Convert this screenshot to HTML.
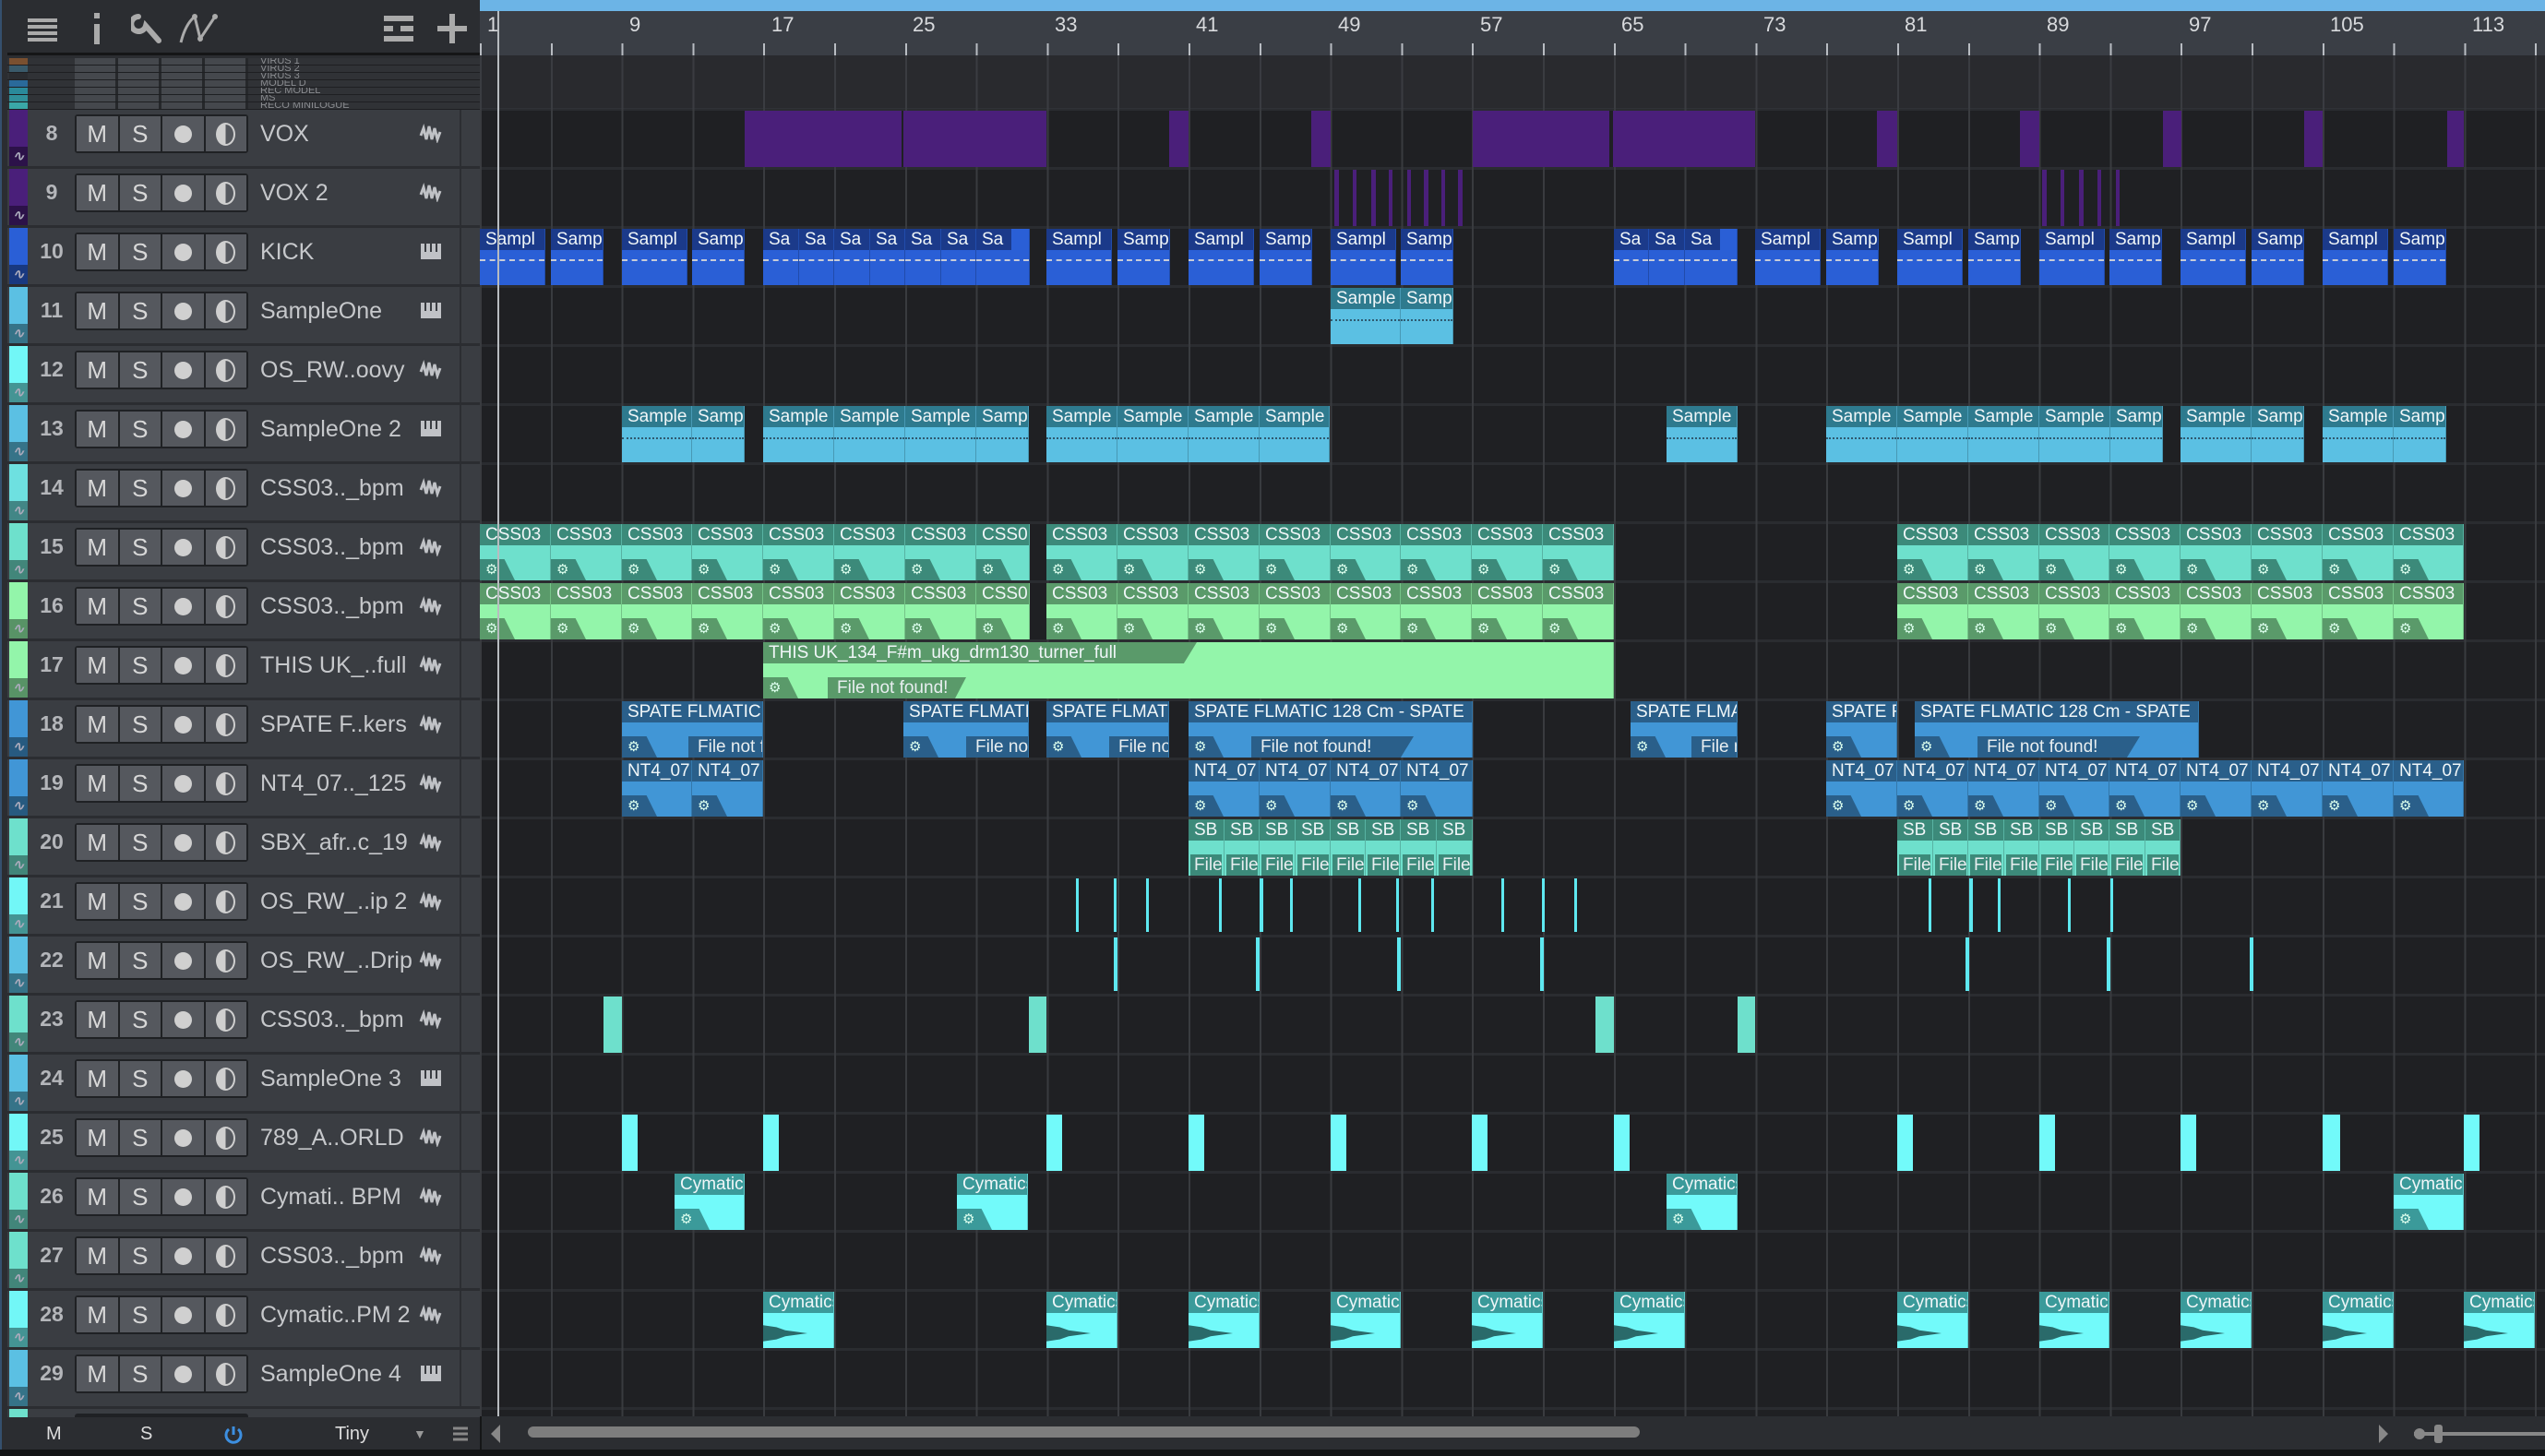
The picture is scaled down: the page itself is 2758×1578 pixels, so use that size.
<!DOCTYPE html>
<html><head><meta charset="utf-8"><style>
*{margin:0;padding:0;box-sizing:border-box}
body{width:2758px;height:1578px;background:#1a1b1d;position:relative;overflow:hidden;font-family:"Liberation Sans",sans-serif}
.abs{position:absolute}
#lp{position:absolute;left:0;top:0;width:520px;height:1578px;background:#2b2d31;border-left:2px solid #35506e}
#tb{position:absolute;left:8px;top:0;width:512px;height:60px;background:#2b2d31;border-bottom:3px solid #151617}
.tr{position:absolute;left:8px;width:512px;height:61px;background:#3a3d42}
.cs{position:absolute;left:2px;top:0;width:20px;height:40px}
.cs2{position:absolute;left:2px;top:40px;width:20px;height:21px;box-shadow:inset 0 0 0 30px rgba(0,0,0,.4);color:#aab;font-size:15px;text-align:center;line-height:21px;font-style:italic}
.n{position:absolute;left:26px;width:44px;top:0;line-height:50px;text-align:center;color:#b4b6ba;font-weight:bold;font-size:23px}
.bt{position:absolute;left:73px;top:5px;width:188px;height:42px;border:2px solid #1f2124;border-radius:3px;background:#1f2124;display:flex;gap:2px}
.bt i{flex:1;background:#55585e;color:#d8d8d8;font-style:normal;font-size:26px;text-align:center;line-height:39px}
.bt i:nth-child(3),.bt i:nth-child(4){font-size:0;color:transparent;display:flex;align-items:center;justify-content:center}
.bt i:nth-child(3)::after{content:"";width:19px;height:19px;border-radius:50%;background:#d0d0d0}
.bt i:nth-child(4)::after{content:"";width:17px;height:21px;border-radius:50%;border:2px solid #cfcfcf;background:linear-gradient(90deg,#cfcfcf 50%,transparent 50%)}
.nm{position:absolute;left:274px;top:0;line-height:52px;color:#c6c8cb;font-size:25px;white-space:nowrap}
.ic{position:absolute;left:446px;top:14px;width:26px;height:22px}
.rc{position:absolute;left:490px;top:0;width:2px;height:61px;background:#2c2e32}
#tl{position:absolute;left:520px;top:60px;width:2238px;height:1475px;background-color:#1f2023;
background-image:repeating-linear-gradient(90deg,#393b3f 0 2px,transparent 2px 76.8px),repeating-linear-gradient(180deg,transparent 0 57px,#2a2c30 57px 60px,transparent 60px 64px);}
#ru{position:absolute;left:520px;top:0;width:2238px;height:60px;background:#3a3e45}
#ru .bl{position:absolute;left:0;top:0;width:100%;height:12px;background:#6cb4e6}
#ru .tk{position:absolute;left:0;top:47px;width:100%;height:13px;background-image:repeating-linear-gradient(90deg,#b8bcc2 0 2px,transparent 2px 76.8px)}
.rn{position:absolute;top:14px;color:#d8dadd;font-size:22px}
.c{position:absolute;height:61px;overflow:hidden}
.h{height:23px;color:#f0f6f8;font-size:19px;line-height:23px;padding-left:6px;white-space:nowrap;overflow:hidden}
.k{background:#2a5fd6}.k .h{background:#1b3a8a}
.k:after{content:"";position:absolute;left:0;right:0;top:33px;border-top:2px dashed #c8ccd8}
.sb{background:#5bc0e3}.sb .h{background:#2e7a8e}
.sb:after{content:"";position:absolute;left:0;right:0;top:34px;border-top:2px dotted #2e5a70}
.t{background:#6ee0cc}.t .h{background:#3c8a7a}
.gr{background:#93f5aa}.gr .h{background:#5a9a6a}
.bu{background:#4196d6}.bu .h{background:#2a5f8a}
.cy{background:#72fafa}.cy .h{background:#3b9a9a}
.c{border-right:1px solid rgba(0,0,0,.2)}
.g{position:absolute;left:0;bottom:0;width:38px;height:23px;clip-path:polygon(0 0,70% 0,100% 100%,0 100%);font-style:normal;color:#dfe;font-size:15px;line-height:23px;padding-left:6px}
.t .g{background:#3c8a7a}.gr .g{background:#5a9a6a}.bu .g{background:#2a5f8a}.cy .g{background:#3b9a9a}
.ft{position:absolute;bottom:0;height:23px;color:#e8eef0;font-size:19px;line-height:23px;padding-left:10px;white-space:nowrap;overflow:hidden;clip-path:polygon(0 0,100% 0,92% 100%,0 100%)}
.bu .ft{background:#2a5f8a}.gr .ft{background:#5a9a6a}.t .ft{background:#3c8a7a}
.p{position:absolute;background:#4a1f7a}
.ln{position:absolute;width:3px;height:58px;background:#5ee8f0}
.wv{position:absolute;left:0;top:34px;width:48px;height:22px;background:#2a6a6a;clip-path:polygon(0 10%,30% 20%,50% 35%,100% 50%,50% 65%,30% 80%,0 90%)}
.mr{position:absolute;left:8px;width:512px;height:8px;background:#303236;border-bottom:1px solid #1e1f22;overflow:hidden}
.mr b{position:absolute;left:2px;top:0;width:20px;height:7px}
.mr s{position:absolute;left:274px;top:-3px;font-size:11px;color:#8a8c90;text-decoration:none;white-space:nowrap}
.mr u{position:absolute;left:73px;top:0;width:188px;height:7px;background:repeating-linear-gradient(90deg,#45484d 0 44px,#26282b 44px 47px)}
</style></head><body>
<svg width="0" height="0" style="position:absolute"><defs>
<symbol id="wv" viewBox="0 0 26 22"><path d="M2 14 L5 6 L8 18 L11 4 L14 18 L17 6 L20 18 L23 10" fill="none" stroke="#c0c2c6" stroke-width="3"/></symbol>
<symbol id="pn" viewBox="0 0 26 22"><rect x="2" y="3" width="22" height="17" fill="#c0c2c6"/><path d="M7 3v9M13 3v9M19 3v9" stroke="#3a3d42" stroke-width="2"/></symbol>
</defs></svg>

<div id="lp"></div>
<div id="tb">
<svg class="abs" style="left:20px;top:18px" width="36" height="28"><path d="M2 4h32M2 11h32M2 18h32M2 25h32" stroke="#aaa" stroke-width="4"/></svg>
<svg class="abs" style="left:90px;top:14px" width="14" height="34"><rect x="4" y="0" width="6" height="6" fill="#aaa"/><rect x="4" y="12" width="6" height="22" fill="#aaa"/></svg>
<svg class="abs" style="left:134px;top:14px" width="36" height="34"><path d="M8 4 a8 8 0 1 0 8 10 L30 30" stroke="#aaa" stroke-width="6" fill="none" stroke-linecap="round"/></svg>
<svg class="abs" style="left:185px;top:14px" width="46" height="34"><path d="M3 32 Q8 12 18 4 L24 28 L40 4" stroke="#aaa" stroke-width="3" fill="none"/><circle cx="18" cy="4" r="3" fill="#aaa"/><circle cx="24" cy="28" r="3" fill="#aaa"/><circle cx="40" cy="4" r="3" fill="#aaa"/></svg>
<svg class="abs" style="left:408px;top:17px" width="34" height="28"><path d="M0 3h32M0 14h10M18 14h14M0 25h32" stroke="#aaa" stroke-width="6"/></svg>
<svg class="abs" style="left:466px;top:15px" width="32" height="32"><path d="M16 0v32M0 16h32" stroke="#aaa" stroke-width="6"/></svg>
</div>

<div class="mr" style="top:63px"><b style="background:#7a5030"></b><u></u><s>VIRUS 1</s></div>
<div class="mr" style="top:71px"><b style="background:#3a5a6a"></b><u></u><s>VIRUS 2</s></div>
<div class="mr" style="top:79px"><b style="background:#2a2c30"></b><u></u><s>VIRUS 3</s></div>
<div class="mr" style="top:87px"><b style="background:#2a6a9a"></b><u></u><s>MODEL D</s></div>
<div class="mr" style="top:95px"><b style="background:#2a8a9a"></b><u></u><s>REC MODEL</s></div>
<div class="mr" style="top:103px"><b style="background:#30909a"></b><u></u><s>MS</s></div>
<div class="mr" style="top:111px"><b style="background:#3aa8a8"></b><u></u><s>RECO MINILOGUE</s></div>

<div class="tr" style="top:119px"><b class="cs" style="background:#4a1f7a"></b><b class="cs2" style="background:#4a1f7a">∿</b><span class="n">8</span><span class="bt"><i>M</i><i>S</i><i>●</i><i>◐</i></span><span class="nm">VOX</span><svg class="ic"><use href="#wv"/></svg><b class="rc"></b></div>
<div class="tr" style="top:183px"><b class="cs" style="background:#4a1f7a"></b><b class="cs2" style="background:#4a1f7a">∿</b><span class="n">9</span><span class="bt"><i>M</i><i>S</i><i>●</i><i>◐</i></span><span class="nm">VOX 2</span><svg class="ic"><use href="#wv"/></svg><b class="rc"></b></div>
<div class="tr" style="top:247px"><b class="cs" style="background:#2a5fd6"></b><b class="cs2" style="background:#2a5fd6">∿</b><span class="n">10</span><span class="bt"><i>M</i><i>S</i><i>●</i><i>◐</i></span><span class="nm">KICK</span><svg class="ic"><use href="#pn"/></svg><b class="rc"></b></div>
<div class="tr" style="top:311px"><b class="cs" style="background:#5bc0e3"></b><b class="cs2" style="background:#5bc0e3">∿</b><span class="n">11</span><span class="bt"><i>M</i><i>S</i><i>●</i><i>◐</i></span><span class="nm">SampleOne</span><svg class="ic"><use href="#pn"/></svg><b class="rc"></b></div>
<div class="tr" style="top:375px"><b class="cs" style="background:#72f7f7"></b><b class="cs2" style="background:#72f7f7">∿</b><span class="n">12</span><span class="bt"><i>M</i><i>S</i><i>●</i><i>◐</i></span><span class="nm">OS_RW..oovy</span><svg class="ic"><use href="#wv"/></svg><b class="rc"></b></div>
<div class="tr" style="top:439px"><b class="cs" style="background:#5bc0e3"></b><b class="cs2" style="background:#5bc0e3">∿</b><span class="n">13</span><span class="bt"><i>M</i><i>S</i><i>●</i><i>◐</i></span><span class="nm">SampleOne 2</span><svg class="ic"><use href="#pn"/></svg><b class="rc"></b></div>
<div class="tr" style="top:503px"><b class="cs" style="background:#6ee0e0"></b><b class="cs2" style="background:#6ee0e0">∿</b><span class="n">14</span><span class="bt"><i>M</i><i>S</i><i>●</i><i>◐</i></span><span class="nm">CSS03.._bpm</span><svg class="ic"><use href="#wv"/></svg><b class="rc"></b></div>
<div class="tr" style="top:567px"><b class="cs" style="background:#6ee0cc"></b><b class="cs2" style="background:#6ee0cc">∿</b><span class="n">15</span><span class="bt"><i>M</i><i>S</i><i>●</i><i>◐</i></span><span class="nm">CSS03.._bpm</span><svg class="ic"><use href="#wv"/></svg><b class="rc"></b></div>
<div class="tr" style="top:631px"><b class="cs" style="background:#93f5aa"></b><b class="cs2" style="background:#93f5aa">∿</b><span class="n">16</span><span class="bt"><i>M</i><i>S</i><i>●</i><i>◐</i></span><span class="nm">CSS03.._bpm</span><svg class="ic"><use href="#wv"/></svg><b class="rc"></b></div>
<div class="tr" style="top:695px"><b class="cs" style="background:#93f5aa"></b><b class="cs2" style="background:#93f5aa">∿</b><span class="n">17</span><span class="bt"><i>M</i><i>S</i><i>●</i><i>◐</i></span><span class="nm">THIS UK_..full</span><svg class="ic"><use href="#wv"/></svg><b class="rc"></b></div>
<div class="tr" style="top:759px"><b class="cs" style="background:#4196d6"></b><b class="cs2" style="background:#4196d6">∿</b><span class="n">18</span><span class="bt"><i>M</i><i>S</i><i>●</i><i>◐</i></span><span class="nm">SPATE F..kers</span><svg class="ic"><use href="#wv"/></svg><b class="rc"></b></div>
<div class="tr" style="top:823px"><b class="cs" style="background:#4196d6"></b><b class="cs2" style="background:#4196d6">∿</b><span class="n">19</span><span class="bt"><i>M</i><i>S</i><i>●</i><i>◐</i></span><span class="nm">NT4_07.._125</span><svg class="ic"><use href="#wv"/></svg><b class="rc"></b></div>
<div class="tr" style="top:887px"><b class="cs" style="background:#6ee0cc"></b><b class="cs2" style="background:#6ee0cc">∿</b><span class="n">20</span><span class="bt"><i>M</i><i>S</i><i>●</i><i>◐</i></span><span class="nm">SBX_afr..c_19</span><svg class="ic"><use href="#wv"/></svg><b class="rc"></b></div>
<div class="tr" style="top:951px"><b class="cs" style="background:#72f7f7"></b><b class="cs2" style="background:#72f7f7">∿</b><span class="n">21</span><span class="bt"><i>M</i><i>S</i><i>●</i><i>◐</i></span><span class="nm">OS_RW_..ip 2</span><svg class="ic"><use href="#wv"/></svg><b class="rc"></b></div>
<div class="tr" style="top:1015px"><b class="cs" style="background:#5bc0e3"></b><b class="cs2" style="background:#5bc0e3">∿</b><span class="n">22</span><span class="bt"><i>M</i><i>S</i><i>●</i><i>◐</i></span><span class="nm">OS_RW_..Drip</span><svg class="ic"><use href="#wv"/></svg><b class="rc"></b></div>
<div class="tr" style="top:1079px"><b class="cs" style="background:#6ee0cc"></b><b class="cs2" style="background:#6ee0cc">∿</b><span class="n">23</span><span class="bt"><i>M</i><i>S</i><i>●</i><i>◐</i></span><span class="nm">CSS03.._bpm</span><svg class="ic"><use href="#wv"/></svg><b class="rc"></b></div>
<div class="tr" style="top:1143px"><b class="cs" style="background:#5bc0e3"></b><b class="cs2" style="background:#5bc0e3">∿</b><span class="n">24</span><span class="bt"><i>M</i><i>S</i><i>●</i><i>◐</i></span><span class="nm">SampleOne 3</span><svg class="ic"><use href="#pn"/></svg><b class="rc"></b></div>
<div class="tr" style="top:1207px"><b class="cs" style="background:#72f7f7"></b><b class="cs2" style="background:#72f7f7">∿</b><span class="n">25</span><span class="bt"><i>M</i><i>S</i><i>●</i><i>◐</i></span><span class="nm">789_A..ORLD</span><svg class="ic"><use href="#wv"/></svg><b class="rc"></b></div>
<div class="tr" style="top:1271px"><b class="cs" style="background:#6ee0cc"></b><b class="cs2" style="background:#6ee0cc">∿</b><span class="n">26</span><span class="bt"><i>M</i><i>S</i><i>●</i><i>◐</i></span><span class="nm">Cymati.. BPM</span><svg class="ic"><use href="#wv"/></svg><b class="rc"></b></div>
<div class="tr" style="top:1335px"><b class="cs" style="background:#6ee0cc"></b><b class="cs2" style="background:#6ee0cc">∿</b><span class="n">27</span><span class="bt"><i>M</i><i>S</i><i>●</i><i>◐</i></span><span class="nm">CSS03.._bpm</span><svg class="ic"><use href="#wv"/></svg><b class="rc"></b></div>
<div class="tr" style="top:1399px"><b class="cs" style="background:#72f7f7"></b><b class="cs2" style="background:#72f7f7">∿</b><span class="n">28</span><span class="bt"><i>M</i><i>S</i><i>●</i><i>◐</i></span><span class="nm">Cymatic..PM 2</span><svg class="ic"><use href="#wv"/></svg><b class="rc"></b></div>
<div class="tr" style="top:1463px"><b class="cs" style="background:#5bc0e3"></b><b class="cs2" style="background:#5bc0e3">∿</b><span class="n">29</span><span class="bt"><i>M</i><i>S</i><i>●</i><i>◐</i></span><span class="nm">SampleOne 4</span><svg class="ic"><use href="#pn"/></svg><b class="rc"></b></div>
<div class="tr" style="top:1527px;height:9px"><b class="cs" style="background:#6ee0cc;height:9px"></b><span class="bt" style="height:9px"></span></div>

<!-- bottom bar left -->
<div class="abs" style="left:8px;top:1536px;width:512px;height:36px;background:#2b2d31;color:#ddd;font-size:20px;line-height:36px">
<span class="abs" style="left:42px">M</span><span class="abs" style="left:144px">S</span>
<svg class="abs" style="left:234px;top:8px" width="22" height="22"><path d="M6 5 A8 8 0 1 0 16 5" stroke="#3d8fe0" stroke-width="3" fill="none"/><path d="M11 2v9" stroke="#3d8fe0" stroke-width="3"/></svg>
<span class="abs" style="left:355px">Tiny</span><span class="abs" style="left:440px;font-size:14px;color:#999">▼</span>
<svg class="abs" style="left:483px;top:10px" width="16" height="16"><path d="M0 2h16M0 8h16M0 14h16" stroke="#888" stroke-width="3"/></svg>
</div>

<div id="ru"><div class="bl"></div><div class="tk"></div>
<span class="rn" style="left:8px">1</span><span class="rn" style="left:162px">9</span><span class="rn" style="left:316px">17</span><span class="rn" style="left:469px">25</span><span class="rn" style="left:623px">33</span><span class="rn" style="left:776px">41</span><span class="rn" style="left:930px">49</span><span class="rn" style="left:1084px">57</span><span class="rn" style="left:1237px">65</span><span class="rn" style="left:1391px">73</span><span class="rn" style="left:1544px">81</span><span class="rn" style="left:1698px">89</span><span class="rn" style="left:1852px">97</span><span class="rn" style="left:2005px">105</span><span class="rn" style="left:2159px">113</span>
</div>
<div id="tl"></div>
<div class="abs" style="left:520px;top:60px;width:2238px;height:58px;background:rgba(60,62,68,.35)"></div>

<!-- VOX -->
<div class="p" style="left:807px;top:120px;width:170px;height:61px"></div>
<div class="p" style="left:979px;top:120px;width:155px;height:61px"></div>
<div class="p" style="left:1267px;top:120px;width:21px;height:61px"></div>
<div class="p" style="left:1421px;top:120px;width:21px;height:61px"></div>
<div class="p" style="left:1596px;top:120px;width:148px;height:61px"></div>
<div class="p" style="left:1748px;top:120px;width:154px;height:61px"></div>
<div class="p" style="left:2034px;top:120px;width:22px;height:61px"></div>
<div class="p" style="left:2189px;top:120px;width:21px;height:61px"></div>
<div class="p" style="left:2344px;top:120px;width:20px;height:61px"></div>
<div class="p" style="left:2497px;top:120px;width:20px;height:61px"></div>
<div class="p" style="left:2652px;top:120px;width:18px;height:61px"></div>
<!-- VOX2 -->
<div class="p" style="left:1446px;top:184px;width:5px;height:61px"></div><div class="p" style="left:1466px;top:184px;width:4px;height:61px"></div><div class="p" style="left:1486px;top:184px;width:5px;height:61px"></div><div class="p" style="left:1505px;top:184px;width:4px;height:61px"></div><div class="p" style="left:1525px;top:184px;width:4px;height:61px"></div><div class="p" style="left:1543px;top:184px;width:5px;height:61px"></div><div class="p" style="left:1562px;top:184px;width:4px;height:61px"></div><div class="p" style="left:1580px;top:184px;width:5px;height:61px"></div>
<div class="p" style="left:2213px;top:184px;width:5px;height:61px"></div><div class="p" style="left:2233px;top:184px;width:4px;height:61px"></div><div class="p" style="left:2253px;top:184px;width:5px;height:61px"></div><div class="p" style="left:2273px;top:184px;width:4px;height:61px"></div><div class="p" style="left:2293px;top:184px;width:4px;height:61px"></div>

<!-- KICK -->
<div class="c k" style="left:520px;top:248px;width:71px"><div class="h">Sampl</div></div>
<div class="c k" style="left:597px;top:248px;width:57px"><div class="h">Samp</div></div>
<div class="c k" style="left:674px;top:248px;width:71px"><div class="h">Sampl</div></div>
<div class="c k" style="left:750px;top:248px;width:57px"><div class="h">Samp</div></div>
<div class="c k" style="left:827px;top:248px;width:39px"><div class="h">Sa</div></div>
<div class="c k" style="left:866px;top:248px;width:38px"><div class="h">Sa</div></div>
<div class="c k" style="left:904px;top:248px;width:39px"><div class="h">Sa</div></div>
<div class="c k" style="left:943px;top:248px;width:38px"><div class="h">Sa</div></div>
<div class="c k" style="left:981px;top:248px;width:39px"><div class="h">Sa</div></div>
<div class="c k" style="left:1020px;top:248px;width:38px"><div class="h">Sa</div></div>
<div class="c k" style="left:1058px;top:248px;width:58px"><div class="h" style="width:38px">Sa</div></div>
<div class="c k" style="left:1134px;top:248px;width:71px"><div class="h">Sampl</div></div>
<div class="c k" style="left:1211px;top:248px;width:57px"><div class="h">Samp</div></div>
<div class="c k" style="left:1288px;top:248px;width:71px"><div class="h">Sampl</div></div>
<div class="c k" style="left:1365px;top:248px;width:57px"><div class="h">Samp</div></div>
<div class="c k" style="left:1442px;top:248px;width:71px"><div class="h">Sampl</div></div>
<div class="c k" style="left:1518px;top:248px;width:57px"><div class="h">Samp</div></div>
<div class="c k" style="left:1749px;top:248px;width:38px"><div class="h">Sa</div></div>
<div class="c k" style="left:1787px;top:248px;width:39px"><div class="h">Sa</div></div>
<div class="c k" style="left:1826px;top:248px;width:57px"><div class="h" style="width:38px">Sa</div></div>
<div class="c k" style="left:1902px;top:248px;width:71px"><div class="h">Sampl</div></div>
<div class="c k" style="left:1979px;top:248px;width:57px"><div class="h">Samp</div></div>
<div class="c k" style="left:2056px;top:248px;width:71px"><div class="h">Sampl</div></div>
<div class="c k" style="left:2133px;top:248px;width:57px"><div class="h">Samp</div></div>
<div class="c k" style="left:2210px;top:248px;width:71px"><div class="h">Sampl</div></div>
<div class="c k" style="left:2286px;top:248px;width:57px"><div class="h">Samp</div></div>
<div class="c k" style="left:2363px;top:248px;width:71px"><div class="h">Sampl</div></div>
<div class="c k" style="left:2440px;top:248px;width:57px"><div class="h">Samp</div></div>
<div class="c k" style="left:2517px;top:248px;width:71px"><div class="h">Sampl</div></div>
<div class="c k" style="left:2594px;top:248px;width:57px"><div class="h">Samp</div></div>

<!-- SampleOne -->
<div class="c sb" style="left:1442px;top:312px;width:76px"><div class="h">Sample</div></div>
<div class="c sb" style="left:1518px;top:312px;width:57px"><div class="h">Samp</div></div>

<!-- SampleOne 2 -->
<div class="c sb" style="left:674px;top:440px;width:76px"><div class="h">Sample</div></div>
<div class="c sb" style="left:750px;top:440px;width:57px"><div class="h">Samp</div></div>
<div class="c sb" style="left:827px;top:440px;width:77px"><div class="h">Sample</div></div>
<div class="c sb" style="left:904px;top:440px;width:77px"><div class="h">Sample</div></div>
<div class="c sb" style="left:981px;top:440px;width:77px"><div class="h">Sample</div></div>
<div class="c sb" style="left:1058px;top:440px;width:57px"><div class="h">Samp</div></div>
<div class="c sb" style="left:1134px;top:440px;width:77px"><div class="h">Sample</div></div>
<div class="c sb" style="left:1211px;top:440px;width:77px"><div class="h">Sample</div></div>
<div class="c sb" style="left:1288px;top:440px;width:77px"><div class="h">Sample</div></div>
<div class="c sb" style="left:1365px;top:440px;width:76px"><div class="h">Sample</div></div>
<div class="c sb" style="left:1806px;top:440px;width:77px"><div class="h">Sample</div></div>
<div class="c sb" style="left:1979px;top:440px;width:77px"><div class="h">Sample</div></div>
<div class="c sb" style="left:2056px;top:440px;width:77px"><div class="h">Sample</div></div>
<div class="c sb" style="left:2133px;top:440px;width:77px"><div class="h">Sample</div></div>
<div class="c sb" style="left:2210px;top:440px;width:77px"><div class="h">Sample</div></div>
<div class="c sb" style="left:2287px;top:440px;width:57px"><div class="h">Samp</div></div>
<div class="c sb" style="left:2363px;top:440px;width:77px"><div class="h">Sample</div></div>
<div class="c sb" style="left:2440px;top:440px;width:57px"><div class="h">Samp</div></div>
<div class="c sb" style="left:2517px;top:440px;width:77px"><div class="h">Sample</div></div>
<div class="c sb" style="left:2594px;top:440px;width:57px"><div class="h">Samp</div></div>

<!-- Track 15 teal -->
<div class="c t" style="left:520px;top:568px;width:77px"><div class="h">CSS03</div><i class="g">⚙</i></div>
<div class="c t" style="left:597px;top:568px;width:77px"><div class="h">CSS03</div><i class="g">⚙</i></div>
<div class="c t" style="left:674px;top:568px;width:76px"><div class="h">CSS03</div><i class="g">⚙</i></div>
<div class="c t" style="left:750px;top:568px;width:77px"><div class="h">CSS03</div><i class="g">⚙</i></div>
<div class="c t" style="left:827px;top:568px;width:77px"><div class="h">CSS03</div><i class="g">⚙</i></div>
<div class="c t" style="left:904px;top:568px;width:77px"><div class="h">CSS03</div><i class="g">⚙</i></div>
<div class="c t" style="left:981px;top:568px;width:77px"><div class="h">CSS03</div><i class="g">⚙</i></div>
<div class="c t" style="left:1058px;top:568px;width:58px"><div class="h">CSS0</div><i class="g">⚙</i></div>
<div class="c t" style="left:1134px;top:568px;width:77px"><div class="h">CSS03</div><i class="g">⚙</i></div>
<div class="c t" style="left:1211px;top:568px;width:77px"><div class="h">CSS03</div><i class="g">⚙</i></div>
<div class="c t" style="left:1288px;top:568px;width:77px"><div class="h">CSS03</div><i class="g">⚙</i></div>
<div class="c t" style="left:1365px;top:568px;width:77px"><div class="h">CSS03</div><i class="g">⚙</i></div>
<div class="c t" style="left:1442px;top:568px;width:76px"><div class="h">CSS03</div><i class="g">⚙</i></div>
<div class="c t" style="left:1518px;top:568px;width:77px"><div class="h">CSS03</div><i class="g">⚙</i></div>
<div class="c t" style="left:1595px;top:568px;width:77px"><div class="h">CSS03</div><i class="g">⚙</i></div>
<div class="c t" style="left:1672px;top:568px;width:77px"><div class="h">CSS03</div><i class="g">⚙</i></div>
<div class="c t" style="left:2056px;top:568px;width:77px"><div class="h">CSS03</div><i class="g">⚙</i></div>
<div class="c t" style="left:2133px;top:568px;width:77px"><div class="h">CSS03</div><i class="g">⚙</i></div>
<div class="c t" style="left:2210px;top:568px;width:76px"><div class="h">CSS03</div><i class="g">⚙</i></div>
<div class="c t" style="left:2286px;top:568px;width:77px"><div class="h">CSS03</div><i class="g">⚙</i></div>
<div class="c t" style="left:2363px;top:568px;width:77px"><div class="h">CSS03</div><i class="g">⚙</i></div>
<div class="c t" style="left:2440px;top:568px;width:77px"><div class="h">CSS03</div><i class="g">⚙</i></div>
<div class="c t" style="left:2517px;top:568px;width:77px"><div class="h">CSS03</div><i class="g">⚙</i></div>
<div class="c t" style="left:2594px;top:568px;width:76px"><div class="h">CSS03</div><i class="g">⚙</i></div>

<!-- Track 16 green -->
<div class="c gr" style="left:520px;top:632px;width:77px"><div class="h">CSS03</div><i class="g">⚙</i></div>
<div class="c gr" style="left:597px;top:632px;width:77px"><div class="h">CSS03</div><i class="g">⚙</i></div>
<div class="c gr" style="left:674px;top:632px;width:76px"><div class="h">CSS03</div><i class="g">⚙</i></div>
<div class="c gr" style="left:750px;top:632px;width:77px"><div class="h">CSS03</div><i class="g">⚙</i></div>
<div class="c gr" style="left:827px;top:632px;width:77px"><div class="h">CSS03</div><i class="g">⚙</i></div>
<div class="c gr" style="left:904px;top:632px;width:77px"><div class="h">CSS03</div><i class="g">⚙</i></div>
<div class="c gr" style="left:981px;top:632px;width:77px"><div class="h">CSS03</div><i class="g">⚙</i></div>
<div class="c gr" style="left:1058px;top:632px;width:58px"><div class="h">CSS0</div><i class="g">⚙</i></div>
<div class="c gr" style="left:1134px;top:632px;width:77px"><div class="h">CSS03</div><i class="g">⚙</i></div>
<div class="c gr" style="left:1211px;top:632px;width:77px"><div class="h">CSS03</div><i class="g">⚙</i></div>
<div class="c gr" style="left:1288px;top:632px;width:77px"><div class="h">CSS03</div><i class="g">⚙</i></div>
<div class="c gr" style="left:1365px;top:632px;width:77px"><div class="h">CSS03</div><i class="g">⚙</i></div>
<div class="c gr" style="left:1442px;top:632px;width:76px"><div class="h">CSS03</div><i class="g">⚙</i></div>
<div class="c gr" style="left:1518px;top:632px;width:77px"><div class="h">CSS03</div><i class="g">⚙</i></div>
<div class="c gr" style="left:1595px;top:632px;width:77px"><div class="h">CSS03</div><i class="g">⚙</i></div>
<div class="c gr" style="left:1672px;top:632px;width:77px"><div class="h">CSS03</div><i class="g">⚙</i></div>
<div class="c gr" style="left:2056px;top:632px;width:77px"><div class="h">CSS03</div><i class="g">⚙</i></div>
<div class="c gr" style="left:2133px;top:632px;width:77px"><div class="h">CSS03</div><i class="g">⚙</i></div>
<div class="c gr" style="left:2210px;top:632px;width:76px"><div class="h">CSS03</div><i class="g">⚙</i></div>
<div class="c gr" style="left:2286px;top:632px;width:77px"><div class="h">CSS03</div><i class="g">⚙</i></div>
<div class="c gr" style="left:2363px;top:632px;width:77px"><div class="h">CSS03</div><i class="g">⚙</i></div>
<div class="c gr" style="left:2440px;top:632px;width:77px"><div class="h">CSS03</div><i class="g">⚙</i></div>
<div class="c gr" style="left:2517px;top:632px;width:77px"><div class="h">CSS03</div><i class="g">⚙</i></div>
<div class="c gr" style="left:2594px;top:632px;width:76px"><div class="h">CSS03</div><i class="g">⚙</i></div>

<!-- Track 17 -->
<div class="c gr" style="left:827px;top:696px;width:922px"><div class="h" style="width:470px;clip-path:polygon(0 0,100% 0,97% 100%,0 100%)">THIS UK_134_F#m_ukg_drm130_turner_full</div><i class="g">⚙</i><span class="ft" style="left:70px;width:150px">File not found!</span></div>

<!-- Track 18 -->
<div class="c bu" style="left:674px;top:760px;width:153px"><div class="h">SPATE FLMATIC 128</div><i class="g">⚙</i><span class="ft" style="left:72px;width:90px;clip-path:none">File not found!</span></div>
<div class="c bu" style="left:979px;top:760px;width:136px"><div class="h">SPATE FLMATIC</div><i class="g">⚙</i><span class="ft" style="left:68px;width:80px;clip-path:none">File not found!</span></div>
<div class="c bu" style="left:1134px;top:760px;width:133px"><div class="h">SPATE FLMATIC</div><i class="g">⚙</i><span class="ft" style="left:68px;width:80px;clip-path:none">File not found!</span></div>
<div class="c bu" style="left:1288px;top:760px;width:308px"><div class="h">SPATE FLMATIC 128 Cm - SPATE</div><i class="g">⚙</i><span class="ft" style="left:68px;width:176px">File not found!</span></div>
<div class="c bu" style="left:1767px;top:760px;width:116px"><div class="h">SPATE FLMATIC</div><i class="g">⚙</i><span class="ft" style="left:66px;width:60px;clip-path:none">File not found!</span></div>
<div class="c bu" style="left:1979px;top:760px;width:77px"><div class="h">SPATE FLM</div><i class="g">⚙</i></div>
<div class="c bu" style="left:2075px;top:760px;width:308px"><div class="h">SPATE FLMATIC 128 Cm - SPATE</div><i class="g">⚙</i><span class="ft" style="left:68px;width:176px">File not found!</span></div>

<!-- Track 19 NT4 -->
<div class="c bu" style="left:674px;top:824px;width:76px"><div class="h">NT4_07</div><i class="g">⚙</i></div>
<div class="c bu" style="left:750px;top:824px;width:77px"><div class="h">NT4_07</div><i class="g">⚙</i></div>
<div class="c bu" style="left:1288px;top:824px;width:77px"><div class="h">NT4_07</div><i class="g">⚙</i></div>
<div class="c bu" style="left:1365px;top:824px;width:77px"><div class="h">NT4_07</div><i class="g">⚙</i></div>
<div class="c bu" style="left:1442px;top:824px;width:76px"><div class="h">NT4_07</div><i class="g">⚙</i></div>
<div class="c bu" style="left:1518px;top:824px;width:78px"><div class="h">NT4_07</div><i class="g">⚙</i></div>
<div class="c bu" style="left:1979px;top:824px;width:77px"><div class="h">NT4_07</div><i class="g">⚙</i></div>
<div class="c bu" style="left:2056px;top:824px;width:77px"><div class="h">NT4_07</div><i class="g">⚙</i></div>
<div class="c bu" style="left:2133px;top:824px;width:77px"><div class="h">NT4_07</div><i class="g">⚙</i></div>
<div class="c bu" style="left:2210px;top:824px;width:76px"><div class="h">NT4_07</div><i class="g">⚙</i></div>
<div class="c bu" style="left:2286px;top:824px;width:77px"><div class="h">NT4_07</div><i class="g">⚙</i></div>
<div class="c bu" style="left:2363px;top:824px;width:77px"><div class="h">NT4_07</div><i class="g">⚙</i></div>
<div class="c bu" style="left:2440px;top:824px;width:77px"><div class="h">NT4_07</div><i class="g">⚙</i></div>
<div class="c bu" style="left:2517px;top:824px;width:77px"><div class="h">NT4_07</div><i class="g">⚙</i></div>
<div class="c bu" style="left:2594px;top:824px;width:76px"><div class="h">NT4_07</div><i class="g">⚙</i></div>

<!-- Track 20 SB -->
<div class="c t" style="left:1288px;top:888px;width:39px"><div class="h">SB</div><span class="ft" style="left:2px;width:34px;clip-path:none;padding-left:4px">File</span></div>
<div class="c t" style="left:1327px;top:888px;width:38px"><div class="h">SB</div><span class="ft" style="left:2px;width:34px;clip-path:none;padding-left:4px">File</span></div>
<div class="c t" style="left:1365px;top:888px;width:39px"><div class="h">SB</div><span class="ft" style="left:2px;width:34px;clip-path:none;padding-left:4px">File</span></div>
<div class="c t" style="left:1404px;top:888px;width:38px"><div class="h">SB</div><span class="ft" style="left:2px;width:34px;clip-path:none;padding-left:4px">File</span></div>
<div class="c t" style="left:1442px;top:888px;width:38px"><div class="h">SB</div><span class="ft" style="left:2px;width:34px;clip-path:none;padding-left:4px">File</span></div>
<div class="c t" style="left:1480px;top:888px;width:38px"><div class="h">SB</div><span class="ft" style="left:2px;width:34px;clip-path:none;padding-left:4px">File</span></div>
<div class="c t" style="left:1518px;top:888px;width:39px"><div class="h">SB</div><span class="ft" style="left:2px;width:34px;clip-path:none;padding-left:4px">File</span></div>
<div class="c t" style="left:1557px;top:888px;width:39px"><div class="h">SB</div><span class="ft" style="left:2px;width:34px;clip-path:none;padding-left:4px">File</span></div>
<div class="c t" style="left:2056px;top:888px;width:39px"><div class="h">SB</div><span class="ft" style="left:2px;width:34px;clip-path:none;padding-left:4px">File</span></div>
<div class="c t" style="left:2095px;top:888px;width:38px"><div class="h">SB</div><span class="ft" style="left:2px;width:34px;clip-path:none;padding-left:4px">File</span></div>
<div class="c t" style="left:2133px;top:888px;width:39px"><div class="h">SB</div><span class="ft" style="left:2px;width:34px;clip-path:none;padding-left:4px">File</span></div>
<div class="c t" style="left:2172px;top:888px;width:38px"><div class="h">SB</div><span class="ft" style="left:2px;width:34px;clip-path:none;padding-left:4px">File</span></div>
<div class="c t" style="left:2210px;top:888px;width:38px"><div class="h">SB</div><span class="ft" style="left:2px;width:34px;clip-path:none;padding-left:4px">File</span></div>
<div class="c t" style="left:2248px;top:888px;width:38px"><div class="h">SB</div><span class="ft" style="left:2px;width:34px;clip-path:none;padding-left:4px">File</span></div>
<div class="c t" style="left:2286px;top:888px;width:39px"><div class="h">SB</div><span class="ft" style="left:2px;width:34px;clip-path:none;padding-left:4px">File</span></div>
<div class="c t" style="left:2325px;top:888px;width:38px"><div class="h">SB</div><span class="ft" style="left:2px;width:34px;clip-path:none;padding-left:4px">File</span></div>

<!-- Track 21 lines -->
<div class="ln" style="left:1166px;top:952px"></div><div class="ln" style="left:1207px;top:952px"></div><div class="ln" style="left:1242px;top:952px"></div><div class="ln" style="left:1321px;top:952px"></div><div class="ln" style="left:1365px;top:952px;width:4px"></div><div class="ln" style="left:1398px;top:952px"></div><div class="ln" style="left:1472px;top:952px"></div><div class="ln" style="left:1513px;top:952px"></div><div class="ln" style="left:1551px;top:952px"></div><div class="ln" style="left:1627px;top:952px"></div><div class="ln" style="left:1671px;top:952px"></div><div class="ln" style="left:1706px;top:952px"></div><div class="ln" style="left:2090px;top:952px"></div><div class="ln" style="left:2134px;top:952px;width:4px"></div><div class="ln" style="left:2165px;top:952px"></div><div class="ln" style="left:2241px;top:952px"></div><div class="ln" style="left:2287px;top:952px"></div>
<!-- Track 22 lines -->
<div class="ln" style="left:1207px;top:1016px;width:4px"></div><div class="ln" style="left:1361px;top:1016px;width:4px"></div><div class="ln" style="left:1514px;top:1016px;width:4px"></div><div class="ln" style="left:1669px;top:1016px;width:4px"></div><div class="ln" style="left:2130px;top:1016px;width:4px"></div><div class="ln" style="left:2283px;top:1016px;width:4px"></div><div class="ln" style="left:2438px;top:1016px;width:4px"></div>
<!-- Track 23 -->
<div class="abs" style="left:654px;top:1080px;width:20px;height:61px;background:#6ee0cc"></div>
<div class="abs" style="left:1115px;top:1080px;width:19px;height:61px;background:#6ee0cc"></div>
<div class="abs" style="left:1729px;top:1080px;width:20px;height:61px;background:#6ee0cc"></div>
<div class="abs" style="left:1883px;top:1080px;width:19px;height:61px;background:#6ee0cc"></div>
<!-- Track 25 -->
<div class="abs" style="left:674px;top:1208px;width:17px;height:61px;background:#72fafa"></div>
<div class="abs" style="left:827px;top:1208px;width:17px;height:61px;background:#72fafa"></div>
<div class="abs" style="left:1134px;top:1208px;width:17px;height:61px;background:#72fafa"></div>
<div class="abs" style="left:1288px;top:1208px;width:17px;height:61px;background:#72fafa"></div>
<div class="abs" style="left:1442px;top:1208px;width:17px;height:61px;background:#72fafa"></div>
<div class="abs" style="left:1595px;top:1208px;width:17px;height:61px;background:#72fafa"></div>
<div class="abs" style="left:1749px;top:1208px;width:17px;height:61px;background:#72fafa"></div>
<div class="abs" style="left:2056px;top:1208px;width:17px;height:61px;background:#72fafa"></div>
<div class="abs" style="left:2210px;top:1208px;width:17px;height:61px;background:#72fafa"></div>
<div class="abs" style="left:2363px;top:1208px;width:17px;height:61px;background:#72fafa"></div>
<div class="abs" style="left:2517px;top:1208px;width:19px;height:61px;background:#72fafa"></div>
<div class="abs" style="left:2670px;top:1208px;width:17px;height:61px;background:#72fafa"></div>
<!-- Track 26 -->
<div class="c cy" style="left:731px;top:1272px;width:76px"><div class="h">Cymatics</div><i class="g">⚙</i></div>
<div class="c cy" style="left:1037px;top:1272px;width:77px"><div class="h">Cymatics</div><i class="g">⚙</i></div>
<div class="c cy" style="left:1806px;top:1272px;width:77px"><div class="h">Cymatics</div><i class="g">⚙</i></div>
<div class="c cy" style="left:2594px;top:1272px;width:76px"><div class="h">Cymatics</div><i class="g">⚙</i></div>
<!-- Track 28 -->
<div class="c cy" style="left:827px;top:1400px;width:77px"><div class="h">Cymatics</div><i class="wv"></i></div>
<div class="c cy" style="left:1134px;top:1400px;width:77px"><div class="h">Cymatics</div><i class="wv"></i></div>
<div class="c cy" style="left:1288px;top:1400px;width:77px"><div class="h">Cymatics</div><i class="wv"></i></div>
<div class="c cy" style="left:1442px;top:1400px;width:76px"><div class="h">Cymatics</div><i class="wv"></i></div>
<div class="c cy" style="left:1595px;top:1400px;width:77px"><div class="h">Cymatics</div><i class="wv"></i></div>
<div class="c cy" style="left:1749px;top:1400px;width:77px"><div class="h">Cymatics</div><i class="wv"></i></div>
<div class="c cy" style="left:2056px;top:1400px;width:77px"><div class="h">Cymatics</div><i class="wv"></i></div>
<div class="c cy" style="left:2210px;top:1400px;width:76px"><div class="h">Cymatics</div><i class="wv"></i></div>
<div class="c cy" style="left:2363px;top:1400px;width:77px"><div class="h">Cymatics</div><i class="wv"></i></div>
<div class="c cy" style="left:2517px;top:1400px;width:77px"><div class="h">Cymatics</div><i class="wv"></i></div>
<div class="c cy" style="left:2670px;top:1400px;width:77px"><div class="h">Cymatics</div><i class="wv"></i></div>

<!-- playhead -->
<div class="abs" style="left:539px;top:12px;width:2px;height:1523px;background:#b8bcc0"></div>

<!-- bottom bar timeline -->
<div class="abs" style="left:520px;top:1535px;width:2238px;height:36px;background:#2b2d31;border-left:2px solid #151617"></div>
<svg class="abs" style="left:530px;top:1544px" width="14" height="20"><path d="M12 0L2 10L12 20Z" fill="#888"/></svg>
<div class="abs" style="left:572px;top:1546px;width:1205px;height:12px;border-radius:6px;background:#7d7d7d"></div>
<svg class="abs" style="left:2576px;top:1544px" width="14" height="20"><path d="M2 0L12 10L2 20Z" fill="#888"/></svg>
<div class="abs" style="left:2616px;top:1552px;width:142px;height:4px;background:#888"></div>
<div class="abs" style="left:2616px;top:1548px;width:12px;height:12px;border-radius:6px;background:#888"></div>
<div class="abs" style="left:2638px;top:1544px;width:9px;height:20px;border-radius:3px;background:#888"></div>
<div class="abs" style="left:0;top:1571px;width:2758px;height:7px;background:#131415"></div>
</body></html>
